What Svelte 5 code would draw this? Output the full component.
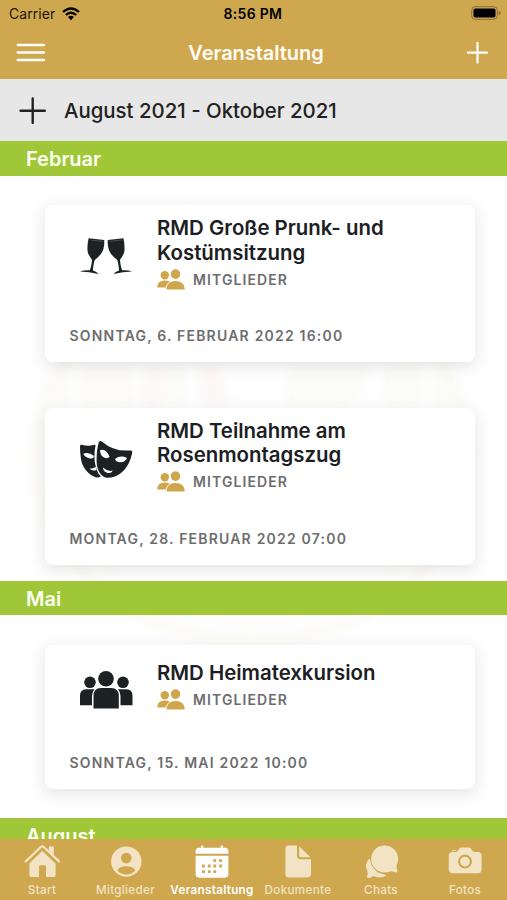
<script>
  const sections = [
    {
      month: 'Februar',
      events: [
        { icon: 'glasses', title: ['RMD Große Prunk- und', 'Kostümsitzung'], date: 'Sonntag, 6. Februar 2022 16:00' },
        { icon: 'masks', title: ['RMD Teilnahme am', 'Rosenmontagszug'], date: 'Montag, 28. Februar 2022 07:00' }
      ]
    },
    {
      month: 'Mai',
      events: [{ icon: 'group', title: ['RMD Heimatexkursion'], date: 'Sonntag, 15. Mai 2022 10:00' }]
    },
    { month: 'August', events: [] }
  ];
  const tabs = [
    { id: 'home', label: 'Start', w: 84 },
    { id: 'user', label: 'Mitglieder', w: 83 },
    { id: 'cal', label: 'Veranstaltung', w: 90, active: true },
    { id: 'doc', label: 'Dokumente', w: 82 },
    { id: 'chat', label: 'Chats', w: 84 },
    { id: 'cam', label: 'Fotos', w: 84 }
  ];
</script>

<div class="screen">
  <svg class="crest" viewBox="0 0 507 900" aria-hidden="true">
    <g fill="none" stroke="#f6f3e6" opacity=".35">
      <ellipse cx="253" cy="457" rx="217" ry="184" stroke-width="10" />
      <ellipse cx="253" cy="457" rx="196" ry="164" stroke-width="3" />
    </g>
    <g opacity=".6">
      <path d="M56 366H66V406H56ZM84 366H132V406H84Z" fill="#faf9f3" />
      <path d="M145 366H168L160 406H142ZM200 366H216L230 406H204Z" fill="#fcf3f2" />
      <path d="M170 366H184V406H164ZM290 366H372L348 406H288ZM385 366H418V406H385ZM440 366H452V406H440Z" fill="#f9faf2" />
    </g>
  </svg>

  <header>
    <div class="status">
      <span class="carrier">Carrier</span>
      <svg class="wifi" width="18" height="14" viewBox="0 0 18 14">
        <g fill="none" stroke="#000" stroke-width="2.3">
          <path d="M1 5Q9-2 17 5" />
          <path d="M3.8 8Q9 3.5 14.2 8" />
        </g>
        <path d="M6 10Q9 7.6 12 10L9 13.2Z" />
      </svg>
      <span class="clock">8:56 PM</span>
      <svg class="battery" width="30" height="15" viewBox="0 0 30 15">
        <rect x=".7" y=".7" width="25.6" height="12.6" rx="3.6" fill="none" stroke="#8a7038" />
        <rect x="2.5" y="2.5" width="22" height="9" rx="1.8" />
        <path d="M27.6 4.8Q29.8 5.5 29.8 7T27.6 9.2Z" fill="#8a7038" />
      </svg>
    </div>
    <div class="nav">
      <svg width="29" height="19" viewBox="0 0 29 19">
        <path d="M1.7 2H27.9M1.7 9.5H27.9M1.7 17H27.9" stroke="#fff" stroke-width="2.3" stroke-linecap="round" />
      </svg>
      <h1>Veranstaltung</h1>
      <svg width="22" height="22" viewBox="0 0 22 22">
        <path d="M10.5 .6V20.6M.9 10.6H20.1" stroke="#fff" stroke-width="2.2" stroke-linecap="round" />
      </svg>
    </div>
  </header>

  <div class="range">
    <svg width="27" height="27" viewBox="0 0 27 27">
      <path d="M13.7 1.4V26M1.6 13.8H25.8" stroke="#222" stroke-width="2.4" stroke-linecap="round" />
    </svg>
    <span>August 2021 - Oktober 2021</span>
  </div>

  <main>
    {#each sections as s}
      <h2><span>{s.month}</span></h2>
      {#if s.events.length}
        <div class="events">
          {#each s.events as e}
            <article class:single={e.title.length === 1}>
              <div class="top">
                {#if e.icon === 'glasses'}
                  <svg class="pic" width="54" height="54" viewBox="0 0 54 54">
                    <g fill="#1c2124">
                      <path d="M9.6 9.2L25.2 11Q25.6 17 24.2 20.8C22.2 26 18.4 28.6 15.6 31.2C14.8 34.5 14 38 14 41.5Q18 42.8 19.4 45Q10 43 1 42.6Q4 41 10.8 41.2C12 38.5 12.8 34.5 13 30.8C10.6 27.4 8.4 24.6 8.4 19.4Q8.4 14 9.6 9.2Z" />
                      <path d="M44.4 9.2L28.8 11Q28.4 17 29.8 20.8C31.8 26 35.6 28.6 38.4 31.2C39.2 34.5 40 38 40 41.5Q36 42.8 34.6 45Q44 43 53 42.6Q50 41 43.2 41.2C42 38.5 41.2 34.5 41 30.8C43.4 27.4 45.6 24.6 45.6 19.4Q45.6 14 44.4 9.2Z" />
                    </g>
                    <path d="M11.2 11L23.6 12.4M42.8 11L30.4 12.4" stroke="#666" stroke-width=".6" />
                  </svg>
                {:else if e.icon === 'masks'}
                  <svg class="pic masks" width="54" height="54" viewBox="0 0 54 54">
                    <path fill="#1c2124" d="M1 12.2Q.9 10.3 3 10.8Q9 12.5 15.2 10.8Q17 10.3 16.4 12C15 20 15 27 17 33.5Q18.5 39.5 22 42.2Q19.5 44.4 16 42.9C7.5 39.5 3 32 2 25Q.9 18 1 12.2Z" />
                    <path fill="#1c2124" d="M20 7.8Q21 6.2 22.8 7.4Q35 18 51.5 16.4Q53.8 16.2 53.2 18.5C52 26 48 35 41 39.8C35 43.8 28 45.2 24 42.2C19 38.5 17.4 32 17.6 24.5Q17.8 14 20 7.8Z" />
                    <path fill="#fff" d="M4.2 19.8Q9.5 17.4 15 22Q14.6 25.2 11 24.4Q6 23.6 4.2 19.8ZM21 16.3Q26.8 14 30.6 22.8Q28.6 25.4 24.5 23.2Q21 21 21 16.3ZM36 25Q41.5 20.8 48 24Q46.5 28.2 41 28.2Q36.8 28 36 25ZM23.8 33.5Q29.2 38 33.8 36.6Q32.4 39.6 28.8 39Q24.6 38 23.8 33.5ZM16.8 33Q14 34.7 10.5 34.7Q13.4 37.5 17.4 36Z" />
                  </svg>
                {:else}
                  <svg class="pic" width="54" height="54" viewBox="0 0 54 54">
                    <g fill="#1c2124">
                      <circle cx="11" cy="17.3" r="5.8" />
                      <circle cx="44" cy="17.3" r="5.8" />
                      <circle cx="27" cy="13.7" r="7.8" />
                      <path d="M1 40.3V31Q1 24.3 7 24.3H15.5Q13 27 13 31V40.3ZM53.5 40.3V31Q53.5 24.3 47.5 24.3H39Q41.5 27 41.5 31V40.3Z" />
                      <path d="M14.5 43.5V31Q14.5 23 22 23H32Q39.8 23 39.8 31V43.5Z" />
                    </g>
                  </svg>
                {/if}
                <div class="info">
                  <h3>{#each e.title as line}<span>{line}</span>{/each}</h3>
                  <div class="who">
                    <svg width="28" height="21" viewBox="0 0 28 21">
                      <g fill="#cfa64c">
                        <circle cx="7.8" cy="6.3" r="4.2" />
                        <circle cx="18.5" cy="5.1" r="4.8" />
                        <path d="M.2 17.8Q.8 11.6 7.8 11.6Q10.8 11.6 12.8 12.8Q9.3 14.8 8.6 18.4H.8Q.2 18.4.2 17.8Z" />
                        <path d="M9.4 19.6Q10.2 12 18.6 12T27.8 19.6Q27.8 20.6 26.8 20.6H10.4Q9.3 20.6 9.4 19.6Z" />
                      </g>
                    </svg>
                    <span>Mitglieder</span>
                  </div>
                </div>
              </div>
              <time>{e.date}</time>
            </article>
          {/each}
        </div>
      {/if}
    {/each}
  </main>

  <footer>
    {#each tabs as t}
      <div class="tab {t.id}" class:active={t.active} style="width:{t.w}px">
        <svg width="36" height="36" viewBox="0 0 36 36" fill="currentColor">
          {#if t.id === 'home'}
            <path d="M18 5.8L31.6 19V31.6Q31.6 33 30.2 33H22V22.6Q22 21.2 20.6 21.2H16.4Q15 21.2 15 22.6V33H6.8Q5.4 33 5.4 31.6V19Z" />
            <path d="M24.8 7V2.4H29.8V13Z" />
            <path d="M4.2 19.4L18.3 6L32.6 19.4" fill="none" stroke="#cfa74f" stroke-width="1.4" />
            <path d="M1.8 17.4L16.8 3Q18.3 1.6 19.8 3L35 17.4" fill="none" stroke="currentColor" stroke-width="2.2" stroke-linecap="round" />
          {:else if t.id === 'user'}
            <path fill-rule="evenodd" d="M18.3 2.4A15.2 15.2 0 1 0 18.3 32.8A15.2 15.2 0 1 0 18.3 2.4ZM18.3 8.8A5.3 5.3 0 0 1 18.3 19.4A5.3 5.3 0 0 1 18.3 8.8ZM9.3 26.4Q11.5 22.2 18.3 22.2T27.3 26.4Q23.6 30.5 18.3 30.5T9.3 26.4Z" />
          {:else if t.id === 'cal'}
            <path d="M1.6 9.8V7.4Q1.6 3.8 5.2 3.8H7V2.4Q7 1.4 8.2 1.4T9.4 2.4V3.8H26.6V2.4Q26.6 1.4 27.8 1.4T29 2.4V3.8H30.8Q34.4 3.8 34.4 7.4V9.8Z" />
            <path d="M1.6 11.8H34.4V29.4Q34.4 33.8 30 33.8H6Q1.6 33.8 1.6 29.4Z" />
            <path d="M19.4 16.6H22.2M25.2 16.6H28M8 22H10.8M13.8 22H16.6M19.4 22H22.2M25.2 22H28M8 27.6H10.8M13.8 27.6H16.6M19.4 27.6H22.2" stroke="#cfa74f" stroke-width="2.8" />
          {:else if t.id === 'doc'}
            <path d="M8.4 1.6H17V11.4Q17 15.2 20.8 15.2H31V29.8Q31 33.6 27.2 33.6H9.2Q5.4 33.6 5.4 29.8V4.6Q5.4 1.6 8.4 1.6Z" />
            <path d="M19.2 2.2L30.4 13.2H20.6Q19.2 13.2 19.2 11.8Z" />
          {:else if t.id === 'chat'}
            <path d="M6.4 14.4L14 28L23.6 31.2C19.6 34 14 34 10.6 32Q7 34.4 4.4 33.8Q3.4 33.4 4 32.2Q5.4 30 4.4 27.2Q.6 20 6.4 14.4Z" />
            <path d="M21.6 1.6C29.4 1.6 35.2 7.6 35.2 15Q35.2 18.6 33.6 21.4Q33.2 23.4 34.4 26.6Q34.8 28.6 33 28.4L28.4 27.2C17.6 31.6 8.2 24.4 8.2 15C8.2 7.6 13.8 1.6 21.6 1.6Z" stroke="#cfa74f" stroke-width="1.5" paint-order="stroke" />
          {:else}
            <path fill-rule="evenodd" d="M10.6 8L12 6Q13 4.6 14.8 4.6H21.4Q23.2 4.6 24.2 6L25.6 8Q26.2 9 28 9H31Q34.6 9 34.6 12.6V26.6Q34.6 30.2 31 30.2H5.4Q1.8 30.2 1.8 26.6V12.6Q1.8 9 5.4 9H8.4Q10 9 10.6 8ZM18 11.6A7 7 0 0 0 18 25.6A7 7 0 0 0 18 11.6Z" />
            <path d="M5.2 8V7H8.6V8Z" />
            <circle cx="18" cy="18.6" r="4.9" />
          {/if}
        </svg>
        <span>{t.label}</span>
      </div>
    {/each}
  </footer>
</div>

<style>
  .screen {
    position: relative;
    display: flex;
    flex-direction: column;
    width: 507px;
    height: 900px;
    overflow: hidden;
    background: #fefefe;
    font-family: Inter, 'Liberation Sans', sans-serif;
    color: #1c2023;
    white-space: nowrap;
  }
  svg { display: block; flex: none; }
  h1, h2, h3 { margin: 0; }
  .crest { position: absolute; inset: 0; width: 507px; height: 900px; filter: blur(4px); }
  header { position: relative; height: 79px; background: #cfa74f; }
  .status { display: flex; align-items: center; height: 27px; padding: 0 6.5px 0 9px; color: #000; }
  .carrier { width: 53px; font-size: 13.9px; letter-spacing: 0.1px; color: #1c1608; }
  .clock { margin-left: 143.5px; font-size: 14px; font-weight: 600; letter-spacing: 0.3px; }
  .battery { margin-left: auto; }
  .nav { display: flex; align-items: center; justify-content: space-between; height: 51px; padding: 0 18px 0 16px; }
  h1 { font-size: 20px; font-weight: 600; letter-spacing: -0.05px; color: #fffdf6; }
  .range {
    position: relative;
    display: flex;
    align-items: center;
    gap: 18px;
    height: 62px;
    padding-left: 19px;
    background: #e7e7e7;
    font-size: 20.4px;
    font-weight: 500;
    color: #222;
  }
  .range span { padding-top: 1px; }
  main { position: relative; flex: 1; overflow: hidden; }
  h2 {
    height: 34.5px;
    padding-left: 26px;
    background: #9fc738;
    font-size: 20px;
    line-height: 36px;
    font-weight: 600;
    color: #fdfff2;
  }
  .events { display: flex; flex-direction: column; gap: 45.5px; padding: 29.5px 32px 16px 44.5px; }
  .events:has(.single) { padding-bottom: 29px; }
  article {
    box-sizing: border-box;
    height: 157px;
    padding: 11px 25px 0;
    border-radius: 8px;
    background: #fff;
    box-shadow: 0 4px 16px rgba(0, 0, 0, 0.11);
  }
  .single { height: 144px; padding-top: 16px; }
  .top { display: flex; height: 108px; }
  .single .top { height: 90px; }
  .pic { margin: 13px 24px 0 9.5px; }
  .masks { margin-top: 15px; }
  .single .pic { margin-top: 4px; }
  h3 { font-size: 20.4px; line-height: 24.5px; font-weight: 600; }
  h3 span { display: block; }
  .who { display: flex; align-items: center; gap: 8px; height: 28px; }
  .who span, time { font-size: 14px; font-weight: 600; letter-spacing: 1.2px; text-transform: uppercase; color: #6d6d6d; }
  .who span { letter-spacing: 1.1px; }
  time { display: block; line-height: 24px; }
  footer { position: relative; display: flex; height: 61.5px; background: #cfa74f; }
  .tab { display: flex; flex-direction: column; align-items: center; padding-top: 5px; color: #f1e3c4; }
  .tab span { margin-top: 2px; font-size: 11.7px; line-height: 16px; font-weight: 500; letter-spacing: 0.3px; }
  .cam svg { margin: -0.5px 0 0.5px; }
  .tab.active { color: #fff; }
  .tab.active span { font-weight: 600; }
</style>
